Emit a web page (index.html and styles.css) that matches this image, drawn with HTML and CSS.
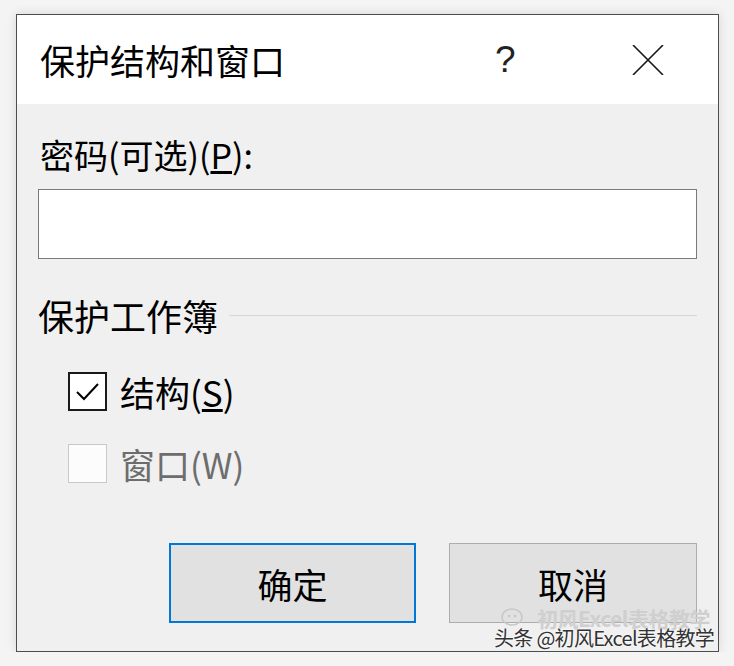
FILE: index.html
```html
<!DOCTYPE html>
<html lang="zh-CN">
<head>
    <meta charset="UTF-8">
    <meta name="viewport" content="width=device-width, initial-scale=1.0">
    <title>保护结构和窗口</title>
    <link rel="stylesheet" href="styles.css">
</head>
<body>
    <div class="dialog">
        <div class="titlebar">
            <span class="title">保护结构和窗口</span>
            <span class="help">?</span>
            <span class="close">
                <svg width="32" height="30" viewBox="0 0 32 30"><path d="M1 0 L31 30 M31 0 L1 30" stroke="#1a1a1a" stroke-width="1.6" fill="none"/></svg>
            </span>
        </div>
        <div class="content">
            <div class="label">密码(可选)(<u>P</u>):</div>
            <div class="input"></div>
            <div class="group">
                <span class="group-title">保护工作簿</span>
                <span class="group-line"></span>
            </div>
            <div class="check-row">
                <span class="box checked">
                    <svg width="35" height="35" viewBox="0 0 35 35"><path d="M7 18 L14 25 L28 10" stroke="#000" stroke-width="2" fill="none"/></svg>
                </span>
                <span class="check-text">结构(<u>S</u>)</span>
            </div>
            <div class="check-row disabled">
                <span class="box"></span>
                <span class="check-text">窗口(W)</span>
            </div>
            <div class="buttons">
                <div class="btn default">确定</div>
                <div class="btn">取消</div>
            </div>
        </div>
        <div class="mark-faint">初风Excel表格教学</div>
        <div class="mark-icon">
            <svg width="26" height="22" viewBox="0 0 26 22"><ellipse cx="12" cy="10" rx="10" ry="8" fill="none" stroke="#c8c8c8" stroke-width="1.5"/><circle cx="9" cy="9" r="1.3" fill="#c8c8c8"/><circle cx="15" cy="9" r="1.3" fill="#c8c8c8"/></svg>
        </div>
        <div class="mark">头条 @初风Excel表格教学</div>
    </div>
</body>
</html>
```

FILE: styles.css
```css
body {margin: 0; background: #f4f4f4; font-family: "Noto Sans CJK SC", "Noto Sans", sans-serif; color: #000;}
.dialog {position: relative; margin: 14px 0 0 16px; width: 701px; height: 636px; border: 1px solid #4d4d4d; background: #f0f0f0; box-shadow: 0 0 10px rgba(0,0,0,0.12); display: flex; flex-direction: column;}
.titlebar {height: 89px; background: #fff; display: flex; align-items: center; padding-left: 23px;}
.title {font-size: 35px; line-height: 40px; flex: 1;}
.help {font-family: "Liberation Sans", sans-serif; font-size: 37px; color: #222; width: 20px; margin-right: 117px;}
.close {width: 32px; height: 30px; margin-right: 54px; display: flex;}
.content {flex: 1; padding: 0 21px 0 21px; font-size: 35px;}
.label {margin-top: 31px; line-height: 40px; padding-left: 2px; font-size: 34px;}
.input {margin-top: 14px; height: 68px; border: 1px solid #7a7a7a; background: #fff;}
.group {margin-top: 36px; height: 40px; display: flex; align-items: center;}
.group-title {line-height: 40px; font-size: 36px;}
.group-line {flex: 1; height: 1px; background: #d7d7d7; margin-left: 11px;}
.check-row {display: flex; align-items: center; height: 39px; margin-top: 37px; padding-left: 30px;}
.check-row.disabled {margin-top: 33px;}
.box {width: 35px; height: 35px; border: 2px solid #1a1a1a; background: #fff; display: flex;}
.disabled .box {width: 37px; height: 37px; border: 1px solid #c8c8c8; background: #fcfcfc;}
.check-text {margin-left: 13px; line-height: 40px;}
.disabled .check-text {color: #6d6d6d;}
.buttons {display: flex; justify-content: flex-end; gap: 33px; margin-top: 60px;}
.btn {width: 246px; height: 78px; border: 1px solid #adadad; background: #e1e1e1; display: flex; align-items: center; justify-content: center; font-size: 35px;}
.btn.default {width: 243px; height: 76px; border: 2px solid #0078d7;}
.mark {position: absolute; left: 477px; top: 610px; font-size: 20px; line-height: 26px; letter-spacing: -0.7px; white-space: nowrap; color: #333; text-shadow: 0 0 2px #fff, 0 0 2px #fff;}
.mark-faint {position: absolute; left: 520px; top: 590px; font-size: 21px; line-height: 26px; letter-spacing: -0.5px; white-space: nowrap; color: #cfcfcf; font-weight: bold;}
.mark-icon {position: absolute; left: 483px; top: 592px;}
```
